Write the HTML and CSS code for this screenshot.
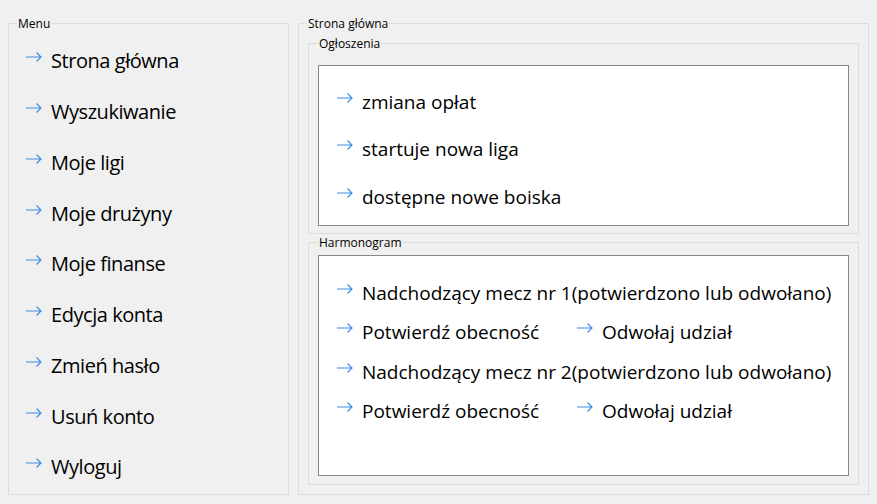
FILE: index.html
```html
<!DOCTYPE html>
<html lang="pl">
<head>
<meta charset="utf-8">
<link rel="stylesheet" href="styles.css">
</head>
<body>
<div class="app">
  <fieldset class="group menu">
    <legend>Menu</legend>
    <ul class="menu-list">
      <li class="menu-item"><svg class="arrow" viewBox="0 0 16 10" width="16" height="10"><path d="M0 5H15M10.5 0.5L15 5L10.5 9.5"/></svg><span>Strona główna</span></li>
      <li class="menu-item"><svg class="arrow" viewBox="0 0 16 10" width="16" height="10"><path d="M0 5H15M10.5 0.5L15 5L10.5 9.5"/></svg><span>Wyszukiwanie</span></li>
      <li class="menu-item"><svg class="arrow" viewBox="0 0 16 10" width="16" height="10"><path d="M0 5H15M10.5 0.5L15 5L10.5 9.5"/></svg><span>Moje ligi</span></li>
      <li class="menu-item"><svg class="arrow" viewBox="0 0 16 10" width="16" height="10"><path d="M0 5H15M10.5 0.5L15 5L10.5 9.5"/></svg><span>Moje drużyny</span></li>
      <li class="menu-item"><svg class="arrow" viewBox="0 0 16 10" width="16" height="10"><path d="M0 5H15M10.5 0.5L15 5L10.5 9.5"/></svg><span>Moje finanse</span></li>
      <li class="menu-item"><svg class="arrow" viewBox="0 0 16 10" width="16" height="10"><path d="M0 5H15M10.5 0.5L15 5L10.5 9.5"/></svg><span>Edycja konta</span></li>
      <li class="menu-item"><svg class="arrow" viewBox="0 0 16 10" width="16" height="10"><path d="M0 5H15M10.5 0.5L15 5L10.5 9.5"/></svg><span>Zmień hasło</span></li>
      <li class="menu-item"><svg class="arrow" viewBox="0 0 16 10" width="16" height="10"><path d="M0 5H15M10.5 0.5L15 5L10.5 9.5"/></svg><span>Usuń konto</span></li>
      <li class="menu-item"><svg class="arrow" viewBox="0 0 16 10" width="16" height="10"><path d="M0 5H15M10.5 0.5L15 5L10.5 9.5"/></svg><span>Wyloguj</span></li>
    </ul>
  </fieldset>

  <fieldset class="group main">
    <legend>Strona główna</legend>
    <fieldset class="group sub news">
      <legend>Ogłoszenia</legend>
      <div class="panel news-panel">
        <div class="row"><svg class="arrow" viewBox="0 0 16 10" width="16" height="10"><path d="M0 5H15M10.5 0.5L15 5L10.5 9.5"/></svg><span>zmiana opłat</span></div>
        <div class="row"><svg class="arrow" viewBox="0 0 16 10" width="16" height="10"><path d="M0 5H15M10.5 0.5L15 5L10.5 9.5"/></svg><span>startuje nowa liga</span></div>
        <div class="row"><svg class="arrow" viewBox="0 0 16 10" width="16" height="10"><path d="M0 5H15M10.5 0.5L15 5L10.5 9.5"/></svg><span>dostępne nowe boiska</span></div>
      </div>
    </fieldset>
    <fieldset class="group sub schedule">
      <legend>Harmonogram</legend>
      <div class="panel schedule-panel">
        <div class="row"><svg class="arrow" viewBox="0 0 16 10" width="16" height="10"><path d="M0 5H15M10.5 0.5L15 5L10.5 9.5"/></svg><span>Nadchodzący mecz nr 1(potwierdzono lub odwołano)</span></div>
        <div class="row actions">
          <div class="action"><svg class="arrow" viewBox="0 0 16 10" width="16" height="10"><path d="M0 5H15M10.5 0.5L15 5L10.5 9.5"/></svg><span>Potwierdź obecność</span></div>
          <div class="action"><svg class="arrow" viewBox="0 0 16 10" width="16" height="10"><path d="M0 5H15M10.5 0.5L15 5L10.5 9.5"/></svg><span>Odwołaj udział</span></div>
        </div>
        <div class="row"><svg class="arrow" viewBox="0 0 16 10" width="16" height="10"><path d="M0 5H15M10.5 0.5L15 5L10.5 9.5"/></svg><span>Nadchodzący mecz nr 2(potwierdzono lub odwołano)</span></div>
        <div class="row actions">
          <div class="action"><svg class="arrow" viewBox="0 0 16 10" width="16" height="10"><path d="M0 5H15M10.5 0.5L15 5L10.5 9.5"/></svg><span>Potwierdź obecność</span></div>
          <div class="action"><svg class="arrow" viewBox="0 0 16 10" width="16" height="10"><path d="M0 5H15M10.5 0.5L15 5L10.5 9.5"/></svg><span>Odwołaj udział</span></div>
        </div>
      </div>
    </fieldset>
  </fieldset>
</div>
</body>
</html>
```

FILE: styles.css
```css
html, body {
  margin: 0;
  padding: 0;
  background: #f0f0f0;
}

body {
  font-family: "Open Sans", "Noto Sans", "Liberation Sans", sans-serif;
  color: #000;
  width: 877px;
  height: 504px;
  overflow: hidden;
}

.app {
  box-sizing: border-box;
  height: 504px;
  display: flex;
  gap: 9px;
  padding: 16px 8px 9px 8px;
}

.group {
  margin: 0;
  min-width: 0;
  border: 1px solid #dcdcdc;
  box-sizing: border-box;
}

.group > legend {
  font-size: 12px;
  line-height: 15px;
  height: 15px;
  padding: 0 1px;
  margin-left: 0;
}

.menu > legend {
  margin-left: 8px;
}

.main > legend {
  margin-left: -1px;
}

.menu {
  width: 281px;
  padding: 0;
}

.menu-list {
  list-style: none;
  margin: 0;
  padding: 5px 0 0 17px;
}

.menu-item {
  height: 50.75px;
  display: flex;
  align-items: center;
  font-size: 20px;
  letter-spacing: -0.45px;
  line-height: 28px;
}

.arrow {
  flex: none;
  fill: none;
  stroke: #3d8fe3;
  stroke-width: 1.2;
  margin-bottom: 8px;
}

.menu-item .arrow {
  margin-right: 9px;
}

.main {
  flex: 1;
  padding: 0 9px 9px 9px;
}

.sub {
  padding: 0 9px 7px 9px;
}

.news {
  margin-top: 5px;
}

.news .panel {
  margin-top: 14px;
}

.schedule {
  margin-top: 1px;
  padding-bottom: 8px;
}

.schedule .panel {
  margin-top: 5px;
}

.panel {
  background: #fff;
  border: 1px solid #828790;
}

.news-panel {
  height: 161px;
  box-sizing: border-box;
  padding-top: 12px;
}

.schedule-panel {
  height: 221px;
  box-sizing: border-box;
  padding-top: 17px;
}

.row {
  display: flex;
  align-items: center;
  padding-left: 18px;
  font-size: 19px;
  line-height: 26px;
}

.news-panel .row {
  height: 47.5px;
}

.schedule-panel .row {
  height: 39.5px;
}

.row .arrow {
  margin-right: 9px;
}

.actions .action {
  display: flex;
  align-items: center;
}

.actions .action:first-child {
  width: 240px;
}
```
